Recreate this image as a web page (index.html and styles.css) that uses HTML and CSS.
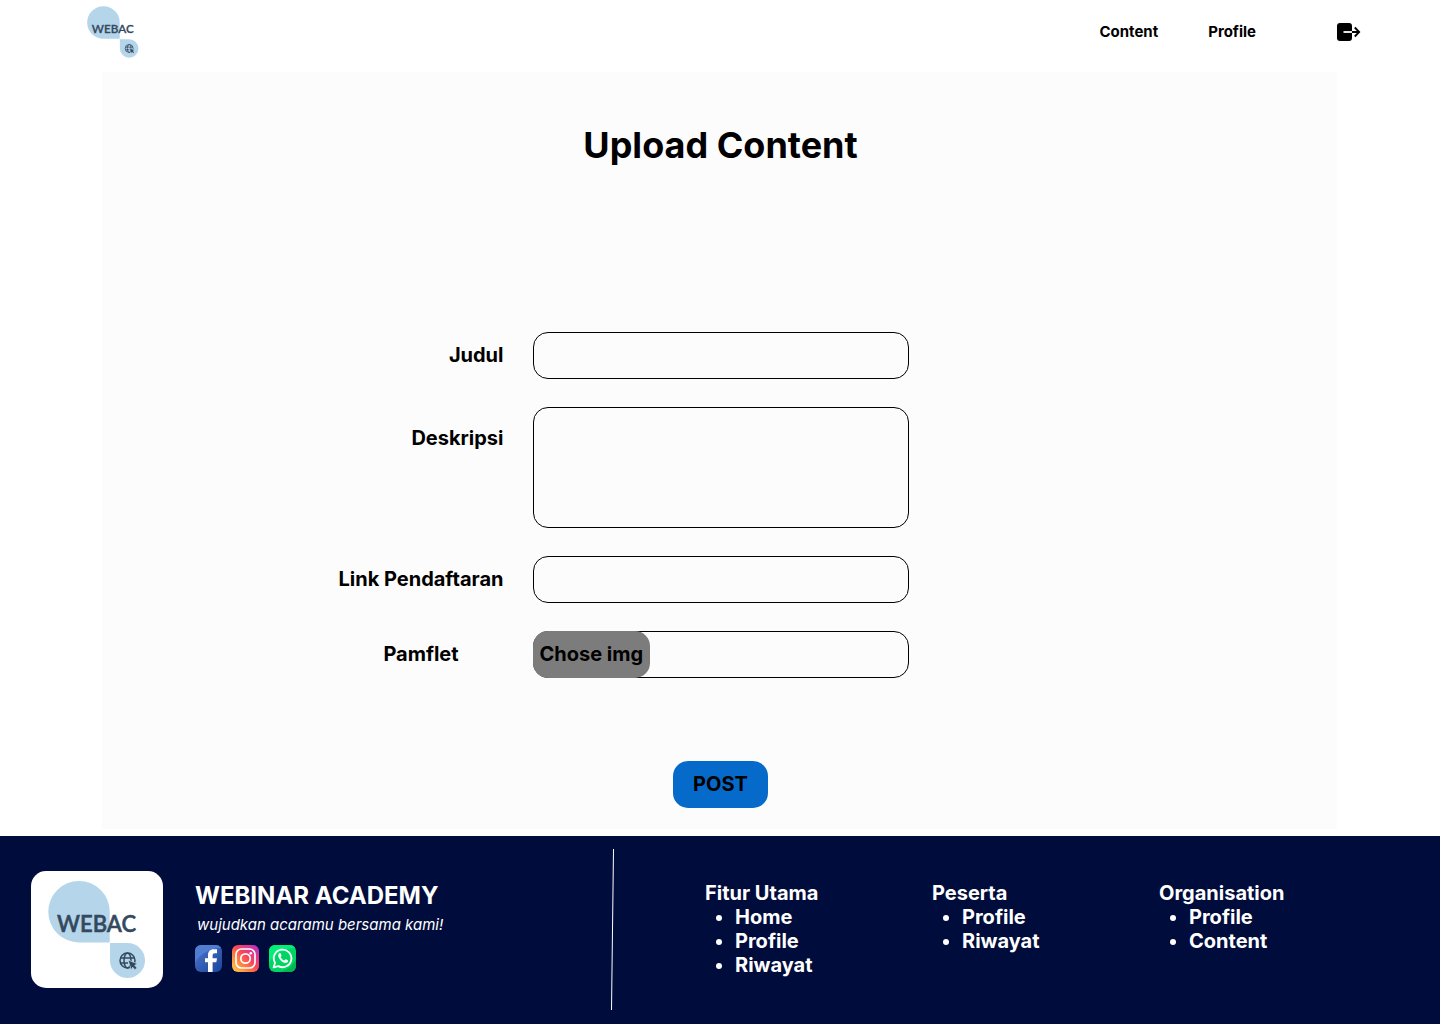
FILE: index.html
```html
<!DOCTYPE html>
<html lang="id">
<head>
<meta charset="utf-8">
<meta name="viewport" content="width=device-width, initial-scale=1">
<title>Upload Content - Webinar Academy</title>
<link rel="stylesheet" href="styles.css">
</head>
<body>
<header class="topbar">
  <a class="topbar-logo" href="#" aria-label="WEBAC">
    <svg width="52" height="52" viewBox="0 0 98 97">
      <g id="logo">
        <path fill="#b5d5ea" d="M31 0A30.700 30.700 0 0 0 31 61.400H61.700V30.700A30.700 30.700 0 0 0 31 0Z"/>
        <path fill="#b5d5ea" d="M62 62H79.500A17.500 17.500 0 1 1 62 79.500Z"/>
        <text x="9" y="51" class="logo-text">WEBAC</text>
        <g fill="none" stroke="#34495e" stroke-width="1.500">
          <circle cx="79.500" cy="79.500" r="7.500"/>
          <ellipse cx="79.500" cy="79.500" rx="3.500" ry="7.500"/>
          <path d="M72.500 77H86.500M72.500 82H80"/>
        </g>
        <path fill="#34495e" stroke="#b5d5ea" stroke-width=".8" d="M80 79L89.500 82.800L86.800 84.300L89 86.900L87 88.700L84.700 86.200L83.200 89Z"/>
      </g>
    </svg>
  </a>
  <nav class="topbar-nav">
    <a href="#">Content</a>
    <a href="#">Profile</a>
    <a class="logout" href="#" aria-label="Logout">
      <svg width="24" height="18" viewBox="0 0 24 18">
        <rect width="15" height="18" rx="3"/>
        <path d="M6.500 9H15" stroke="#fff" stroke-width="1.800"/>
        <path d="M15 9H22M17.800 4.500L22.200 9L17.800 13.500" fill="none" stroke="#000" stroke-width="1.800"/>
      </svg>
    </a>
  </nav>
</header>

<main class="panel">
  <h1>Upload Content</h1>
  <form class="form">
    <label for="judul">Judul</label>
    <input class="field" id="judul" type="text">
    <label class="label-top" for="deskripsi">Deskripsi</label>
    <textarea class="field field-tall" id="deskripsi"></textarea>
    <label for="link">Link Pendaftaran</label>
    <input class="field" id="link" type="text">
    <label class="label-center" for="pamflet">Pamflet</label>
    <div class="field picker"><button type="button" id="pamflet">Chose img</button></div>
    <button class="post" type="submit">POST</button>
  </form>
</main>

<footer class="footer">
  <div class="brand">
    <div class="brand-card"><svg width="98" height="97" viewBox="0 0 98 97"><use href="#logo"/></svg></div>
    <div class="brand-info">
      <h2>WEBINAR ACADEMY</h2>
      <p>wujudkan acaramu bersama kami!</p>
      <div class="social">
        <a href="#" aria-label="Facebook">
          <svg width="27" height="27" viewBox="0 0 27 27">
            <defs><linearGradient id="fb" x1="0" y1="0" x2="1" y2="1"><stop offset=".3" stop-color="#3d68bd"/><stop offset="1" stop-color="#1a459b"/></linearGradient></defs>
            <rect width="27" height="27" rx="6" fill="url(#fb)"/>
            <path fill="#507cd2" d="M6 0H21A6 6 0 0 1 26 3C16 3 4 9 0 18V6A6 6 0 0 1 6 0Z"/>
            <path fill="#fff" d="M13 27V17.300H10V13.300H13V10.500C13 6.400 15 4.300 18.600 4.300H22V8.300H20C18.300 8.300 17.600 9 17.600 10.700V13.300H22L21.300 17.300H17.600V27Z"/>
          </svg>
        </a>
        <a href="#" aria-label="Instagram">
          <svg width="27" height="27" viewBox="0 0 27 27">
            <defs><linearGradient id="ig" x1="0" y1="1" x2="1" y2="0"><stop offset="0" stop-color="#ffd34f"/><stop offset=".3" stop-color="#ff8a3d"/><stop offset=".55" stop-color="#fb4558"/><stop offset=".8" stop-color="#d936a0"/><stop offset="1" stop-color="#9b36c8"/></linearGradient></defs>
            <rect width="27" height="27" rx="6" fill="url(#ig)"/>
            <g fill="none" stroke="#fff" stroke-width="1.700"><rect x="4" y="4" width="19" height="19" rx="5.500"/><circle cx="13.500" cy="13.500" r="4.700"/></g>
            <circle cx="18.800" cy="8.200" r="1.300" fill="#fff"/>
          </svg>
        </a>
        <a href="#" aria-label="WhatsApp">
          <svg width="27" height="27" viewBox="0 0 27 27">
            <rect width="27" height="27" rx="6" fill="#00d563"/>
            <path fill="#00f076" d="M6 0H21A6 6 0 0 1 26 3C16 3 4 9 0 18V6A6 6 0 0 1 6 0Z"/>
            <path fill="#00b84f" d="M27 14V21A6 6 0 0 1 21 27H11C18 25 24 21 27 14Z"/>
            <path fill="none" stroke="#fff" stroke-width="1.800" stroke-linejoin="round" d="M4.600 22.400L6 17.800A8.800 8.800 0 1 1 9.400 21.100Z"/>
            <path fill="#fff" d="M10.200 8.300C10.700 7.900 11.500 8 11.700 8.500L12.500 10.500C12.600 11 11.600 11.800 11.700 12.200C12.500 13.800 13.700 14.800 15.200 15.400C15.700 15.500 16.400 14 16.900 14.200L18.900 15.200C19.500 15.600 18.900 17.100 18.200 17.500C16.700 18.400 14.200 17.700 12 15.700C9.600 13.500 8.200 10.200 10.200 8.300Z"/>
          </svg>
        </a>
      </div>
    </div>
  </div>
  <svg class="divider" width="4" height="162" viewBox="0 0 4 162" aria-hidden="true"><path d="M2.500 0L0.500 161" stroke="#fff"/></svg>
  <nav class="links">
    <section>
      <h3>Fitur Utama</h3>
      <ul><li><a href="#">Home</a></li><li><a href="#">Profile</a></li><li><a href="#">Riwayat</a></li></ul>
    </section>
    <section>
      <h3>Peserta</h3>
      <ul><li><a href="#">Profile</a></li><li><a href="#">Riwayat</a></li></ul>
    </section>
    <section>
      <h3>Organisation</h3>
      <ul><li><a href="#">Profile</a></li><li><a href="#">Content</a></li></ul>
    </section>
  </nav>
</footer>
</body>
</html>
```
FILE: styles.css
```css
* { box-sizing: border-box; }
body {
  margin: 0;
  min-height: 100vh;
  display: flex;
  flex-direction: column;
  background: #fff;
  color: #000;
  font-family: Inter, "Liberation Sans", sans-serif;
  font-size: 20px;
  line-height: 24px;
  font-weight: 700;
}
h1, h2, h3, p, ul { margin: 0; }
a { color: inherit; text-decoration: none; }
svg { display: block; }
button, input, textarea { font: inherit; color: inherit; }
.logo-text {
  font: 600 22px Lato, sans-serif;
  fill: #34495e;
  stroke: #34495e;
  stroke-width: 0.5;
}

.topbar {
  display: flex;
  align-items: center;
  justify-content: space-between;
  padding: 6px 79px 14px 87px;
}
.topbar-nav { display: flex; align-items: center; gap: 50px; font-size: 15px; }
.logout { margin-left: 31px; }

.panel {
  flex: 1;
  margin: 0 103px 7px 102px;
  padding: 50px 0 21px 2px;
  background: #fcfcfc;
}
h1 { font-size: 36px; line-height: 46px; text-align: center; }
.form {
  display: grid;
  grid-template-columns: 1fr 376px 1fr;
  gap: 28px;
  margin-top: 164px;
}
.form label { grid-column: 1; justify-self: end; align-self: center; padding: 0 1px 2px 0; }
.form .label-top { align-self: start; margin-top: 19px; }
.form .label-center { width: 166px; text-align: center; }
.field {
  grid-column: 2;
  width: 100%;
  height: 47px;
  padding: 0 14px;
  border: 1px solid #000;
  border-radius: 15px;
  background: transparent;
}
.field-tall { display: block; height: 121px; padding: 10px 14px; resize: none; }
.picker { padding: 0; }
.picker button {
  height: 47px;
  margin: -1px;
  padding: 0 7px 2px;
  border: 0;
  border-radius: 15px;
  background: #7c7c7c;
}
.post {
  grid-column: 2;
  justify-self: center;
  width: 95px;
  height: 47px;
  margin-top: 55px;
  padding: 0 0 2px;
  border: 0;
  border-radius: 15px;
  background: #066acb;
}

.footer {
  display: flex;
  align-items: flex-start;
  padding: 13px 0 13px 31px;
  background: #000c3b;
  color: #fff;
}
.brand { flex: 0 0 580px; display: flex; gap: 32px; padding-top: 22px; }
.brand-card {
  width: 132px;
  height: 117px;
  padding: 10px 17px;
  border-radius: 15px;
  background: #fff;
}
.brand-info { padding-top: 10px; }
h2 { font-size: 24px; line-height: 30px; }
.brand-info p {
  margin-top: 2px;
  padding-left: 2px;
  font-size: 15px;
  font-style: italic;
  font-weight: 400;
}
.social { display: flex; gap: 10px; margin-top: 8px; }
.links {
  flex: 1;
  display: grid;
  grid-template-columns: repeat(3, 1fr);
  padding: 32px 54px 0 90px;
}
h3 { font-size: 20px; }
ul { padding-left: 30px; }
```
